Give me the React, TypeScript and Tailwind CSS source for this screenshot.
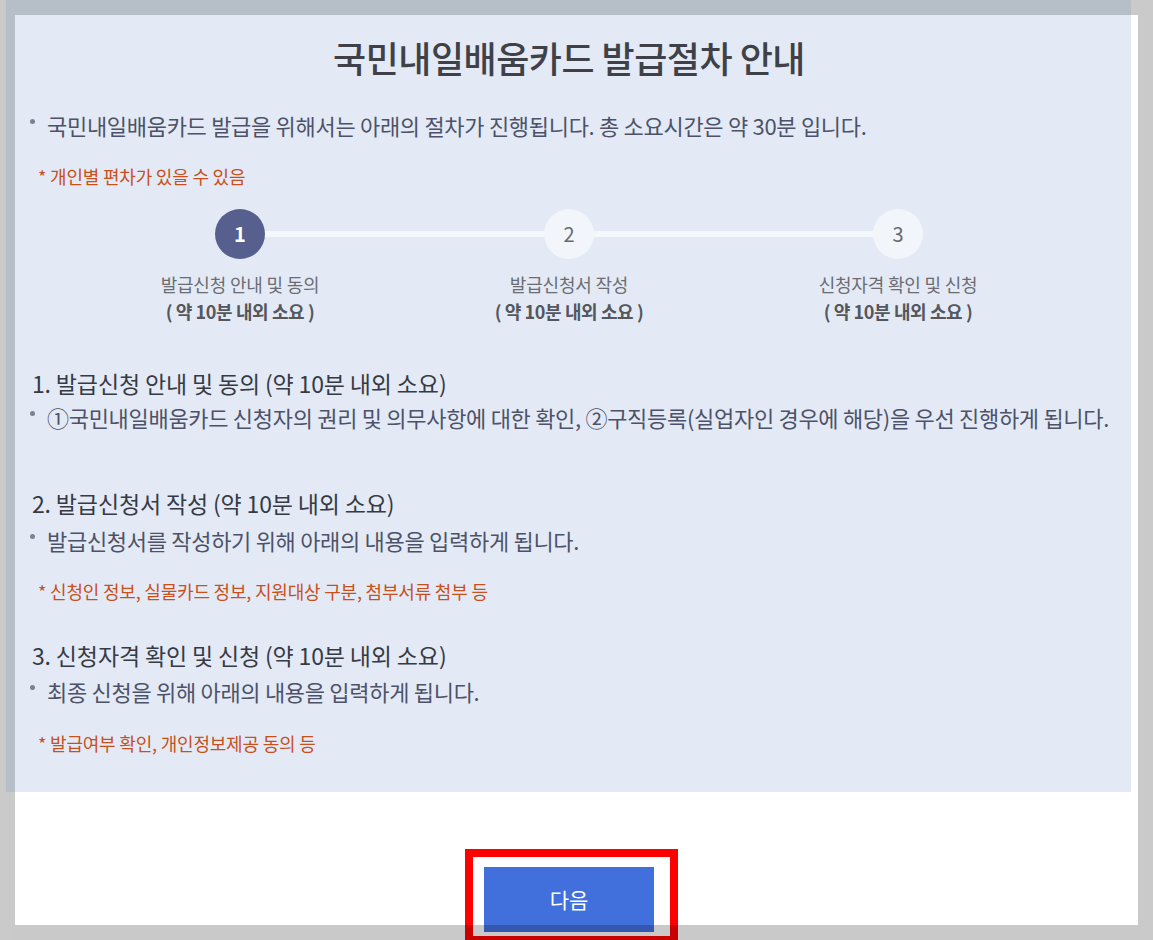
import React from "react";

const font = { fontFamily: '"Noto Sans CJK KR", "Noto Sans", sans-serif' };

function Bullet({ children, className = "" }: { children: React.ReactNode; className?: string }) {
  return (
    <div className={"relative whitespace-nowrap pl-[15px] text-[22px] leading-[30px] tracking-[-0.3px] text-[#4d5269] " + className}>
      <span className="absolute left-[-2px] top-[9px] w-[5px] h-[5px] rounded-full bg-[#7b8095]" />
      {children}
    </div>
  );
}

function Note({ children, className = "" }: { children: React.ReactNode; className?: string }) {
  return (
    <div className={"pl-[6px] text-[18px] leading-[24px] tracking-[-0.2px] text-[#c7501d] " + className}>{children}</div>
  );
}

function Heading({ children, className = "" }: { children: React.ReactNode; className?: string }) {
  return <div className={"text-[23px] leading-[32px] tracking-[-0.15px] text-[#363a45] " + className}>{children}</div>;
}

const steps = [
  { n: "1", label: "발급신청 안내 및 동의", active: true },
  { n: "2", label: "발급신청서 작성", active: false },
  { n: "3", label: "신청자격 확인 및 신청", active: false },
];

export default function App() {
  return (
    <div className="relative w-[1153px] h-[940px] bg-[#cacaca] overflow-hidden" style={font}>
      <div className="absolute left-[6px] top-0 w-[1125px] h-[792px] bg-[#b6bec8]" />
      <div className="relative z-10 ml-[15px] pt-[15px]">
        <div className="relative w-[1123px] h-[925px] bg-white">
          <div className="w-[1116px] h-[777px] bg-[#e3eaf5] pl-[17px] pr-[25px] pt-[18px]">
            <h1 className="text-center text-[36px] leading-[48px] tracking-[-0.5px] font-medium text-[#404148]">
              국민내일배움카드 발급절차 안내
            </h1>
            <Bullet className="mt-[29px]">
              국민내일배움카드 발급을 위해서는 아래의 절차가 진행됩니다. 총 소요시간은 약 30분 입니다.
            </Bullet>
            <Note className="mt-[24px]">* 개인별 편차가 있을 수 있음</Note>

            <div className="relative mx-auto mt-[21px] w-[987px]">
              <div className="absolute left-[164px] right-[164px] top-[22px] h-[6px] bg-[#f4f7fb]" />
              <div className="relative grid grid-cols-3">
                {steps.map((s) => (
                  <div key={s.n} className="flex flex-col items-center">
                    <div
                      className={
                        "w-[50px] h-[50px] rounded-full flex items-center justify-center text-[20px] " +
                        (s.active
                          ? "bg-[#565f8d] text-white font-bold"
                          : "bg-[#f2f5fa] text-[#666a73]")
                      }
                    >
                      {s.n}
                    </div>
                    <div className="mt-[12px] text-[18px] leading-[27px] tracking-[-0.2px] text-[#6b6d73]">{s.label}</div>
                    <div className="text-[18px] leading-[27px] tracking-[-0.4px] font-bold text-[#55575e]">( 약 10분 내외 소요 )</div>
                  </div>
                ))}
              </div>
            </div>

            <Heading className="mt-[42px]">1. 발급신청 안내 및 동의 (약 10분 내외 소요)</Heading>
            <Bullet className="mt-[3px]">
              ①국민내일배움카드 신청자의 권리 및 의무사항에 대한 확인, ②구직등록(실업자인 경우에 해당)을 우선 진행하게 됩니다.
            </Bullet>

            <Heading className="mt-[55px]">2. 발급신청서 작성 (약 10분 내외 소요)</Heading>
            <Bullet className="mt-[6px]">발급신청서를 작성하기 위해 아래의 내용을 입력하게 됩니다.</Bullet>
            <Note className="mt-[24px]">* 신청인 정보, 실물카드 정보, 지원대상 구분, 첨부서류 첨부 등</Note>

            <Heading className="mt-[36px]">3. 신청자격 확인 및 신청 (약 10분 내외 소요)</Heading>
            <Bullet className="mt-[5px]">최종 신청을 위해 아래의 내용을 입력하게 됩니다.</Bullet>
            <Note className="mt-[25px]">* 발급여부 확인, 개인정보제공 동의 등</Note>
          </div>

          <div className="ml-[450px] mt-[57px] w-[213px] h-[95px] border-[8px] border-[#ff0000] pl-[11px] pt-[10px]">
            <button className="w-[170px] h-[65px] bg-[#4170dc] text-white text-[21px] flex items-center justify-center">
              다음
            </button>
          </div>

          <div className="absolute left-0 right-0 bottom-0 h-[15px] bg-black/[0.21] z-20" />
        </div>
      </div>
    </div>
  );
}
